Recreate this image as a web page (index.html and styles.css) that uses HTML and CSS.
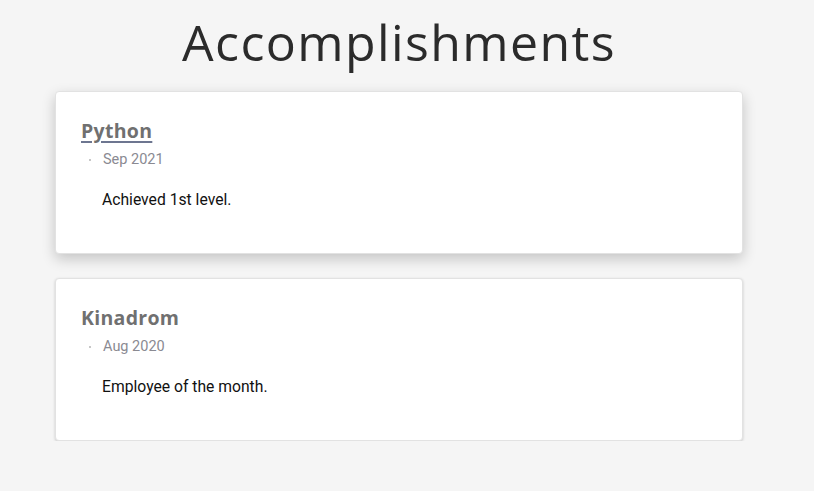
FILE: index.html
```html
<!DOCTYPE html>
<html lang="en">
<head>
<meta charset="utf-8">
<title>Accomplishments</title>
<link rel="stylesheet" href="styles.css">
</head>
<body>
<main class="page">
  <h1 class="title">Accomplishments</h1>
  <section class="list">
    <article class="card card--raised">
      <h3 class="card-title"><a class="card-link" href="#">Python</a></h3>
      <ul class="meta"><li class="meta-item">Sep 2021</li></ul>
      <p class="desc">Achieved 1st level.</p>
    </article>
    <article class="card">
      <h3 class="card-title">Kinadrom</h3>
      <ul class="meta"><li class="meta-item">Aug 2020</li></ul>
      <p class="desc">Employee of the month.</p>
    </article>
  </section>
</main>
</body>
</html>
```
FILE: styles.css
```css
html, body {
  margin: 0;
  padding: 0;
  background: #f5f5f5;
}
body {
  font-family: Roboto, "Liberation Sans", sans-serif;
  color: #000;
}
.page {
  width: 798px;
  display: flex;
  flex-direction: column;
  align-items: center;
}
.title {
  margin: 11px 0 0;
  font-family: "Open Sans", "Liberation Sans", sans-serif;
  font-weight: 400;
  font-size: 50px;
  line-height: 62px;
  letter-spacing: 1.4px;
  color: #2b2b2b;
}
.list {
  width: 688px;
  margin-top: 18px;
  display: flex;
  flex-direction: column;
  gap: 24px;
}
.card {
  box-sizing: border-box;
  height: 163px;
  background: #fff;
  border: 1px solid #e2e2e2;
  border-radius: 4px;
  padding: 26px 25px 0;
  box-shadow: 0 1px 3px rgba(0, 0, 0, 0.18);
}
.card--raised {
  box-shadow: 0 5px 14px rgba(0, 0, 0, 0.2);
}
.card-title {
  margin: 0;
  font-family: "Open Sans", "Liberation Sans", sans-serif;
  font-weight: 700;
  font-size: 19.5px;
  line-height: 26px;
  letter-spacing: 0.3px;
  color: #707070;
}
.card-link {
  color: #707070;
  text-decoration: underline;
  text-decoration-color: #6d7690;
  text-decoration-thickness: 2px;
  text-underline-offset: 3px;
}
.meta {
  list-style: none;
  margin: 7px 0 0;
  padding: 0 0 0 22px;
}
.meta-item {
  position: relative;
  font-size: 14.5px;
  line-height: 18px;
  color: #8a8a92;
}
.meta-item::before {
  content: "";
  position: absolute;
  left: -14px;
  top: 8px;
  width: 2px;
  height: 2px;
  border-radius: 50%;
  background: #b4b4b4;
}
.desc {
  margin: 21px 0 0 21px;
  font-size: 15.7px;
  line-height: 20px;
  color: #111;
}
```
